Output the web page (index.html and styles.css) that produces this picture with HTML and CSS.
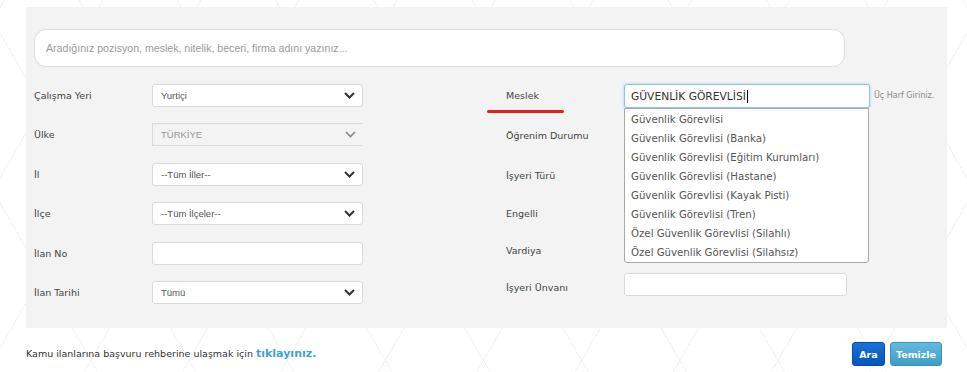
FILE: index.html
```html
<!DOCTYPE html>
<html lang="tr">
<head>
    <meta charset="UTF-8">
    <meta name="viewport" content="width=device-width, initial-scale=1.0">
    <title>İş İlanı Arama</title>
    <link rel="stylesheet" href="styles.css">
</head>
<body>
    <div class="page">
        <div class="panel">
            <div class="search-box">Aradığınız pozisyon, meslek, nitelik, beceri, firma adını yazınız...</div>

            <div class="form">
                <div class="col col-left">
                    <div class="row">
                        <label>Çalışma Yeri</label>
                        <div class="select">
                            <span>Yurtiçi</span>
                            <svg class="chev" width="11" height="7" viewBox="0 0 11 7"><polyline points="1,1 5.5,5.5 10,1" /></svg>
                        </div>
                    </div>
                    <div class="row">
                        <label>Ülke</label>
                        <div class="select disabled">
                            <span>TÜRKİYE</span>
                            <svg class="chev" width="11" height="7" viewBox="0 0 11 7"><polyline points="1,1 5.5,5.5 10,1" /></svg>
                        </div>
                    </div>
                    <div class="row">
                        <label>İl</label>
                        <div class="select">
                            <span>--Tüm İller--</span>
                            <svg class="chev" width="11" height="7" viewBox="0 0 11 7"><polyline points="1,1 5.5,5.5 10,1" /></svg>
                        </div>
                    </div>
                    <div class="row">
                        <label>İlçe</label>
                        <div class="select">
                            <span>--Tüm İlçeler--</span>
                            <svg class="chev" width="11" height="7" viewBox="0 0 11 7"><polyline points="1,1 5.5,5.5 10,1" /></svg>
                        </div>
                    </div>
                    <div class="row">
                        <label>İlan No</label>
                        <div class="text-input"></div>
                    </div>
                    <div class="row">
                        <label>İlan Tarihi</label>
                        <div class="select">
                            <span>Tümü</span>
                            <svg class="chev" width="11" height="7" viewBox="0 0 11 7"><polyline points="1,1 5.5,5.5 10,1" /></svg>
                        </div>
                    </div>
                </div>

                <div class="col col-right">
                    <div class="row">
                        <label class="marked">Meslek</label>
                        <div class="meslek">
                            <div class="text-input focused">GÜVENLİK GÖREVLİSİ<span class="caret"></span></div>
                            <ul class="suggestions">
                                <li>Güvenlik Görevlisi</li>
                                <li>Güvenlik Görevlisi (Banka)</li>
                                <li>Güvenlik Görevlisi (Eğitim Kurumları)</li>
                                <li>Güvenlik Görevlisi (Hastane)</li>
                                <li>Güvenlik Görevlisi (Kayak Pisti)</li>
                                <li>Güvenlik Görevlisi (Tren)</li>
                                <li>Özel Güvenlik Görevlisi (Silahlı)</li>
                                <li>Özel Güvenlik Görevlisi (Silahsız)</li>
                            </ul>
                        </div>
                        <span class="hint">Üç Harf Giriniz.</span>
                    </div>
                    <div class="row"><label>Öğrenim Durumu</label></div>
                    <div class="row"><label>İşyeri Türü</label></div>
                    <div class="row"><label>Engelli</label></div>
                    <div class="row"><label>Vardiya</label></div>
                    <div class="row">
                        <label>İşyeri Ünvanı</label>
                        <div class="text-input short"></div>
                    </div>
                </div>
            </div>
        </div>

        <div class="footer">
            <p class="guide">Kamu ilanlarına başvuru rehberine ulaşmak için <a href="#">tıklayınız.</a></p>
            <div class="buttons">
                <button class="btn btn-primary">Ara</button>
                <button class="btn btn-info">Temizle</button>
            </div>
        </div>
    </div>
</body>
</html>
```

FILE: styles.css
```css
* {
    margin: 0;
    padding: 0;
    box-sizing: border-box;
}

body {
    font-family: "DejaVu Sans", Verdana, sans-serif;
    background-color: #fff;
    background-image:
        repeating-linear-gradient(60deg, transparent 0, transparent 84px, #f3f3f3 84px, #f3f3f3 85px),
        repeating-linear-gradient(-60deg, transparent 0, transparent 84px, #f3f3f3 84px, #f3f3f3 85px);
    height: 372px;
    overflow: hidden;
}

.page {
    width: 921px;
    margin-left: 26px;
    padding-top: 7px;
}

.panel {
    background: #f3f3f3;
    height: 321px;
    padding: 22px 8px 0 8px;
}

.search-box {
    width: 811px;
    height: 38px;
    background: #fff;
    border: 1px solid #dcdcdc;
    border-radius: 12px;
    padding-left: 11px;
    display: flex;
    align-items: center;
    font-family: "Liberation Sans", Arial, sans-serif;
    font-size: 10.6px;
    color: #9a9a9a;
}

.form {
    display: flex;
    margin-top: 17px;
}

.col {
    display: flex;
    flex-direction: column;
}

.col-left {
    width: 472px;
}

.col-left .row {
    height: 39.4px;
}

.col-right .row {
    height: 37.8px;
}

.row {
    display: flex;
    align-items: flex-start;
    position: relative;
}

label {
    font-size: 9.5px;
    color: #444;
    line-height: 24px;
    height: 24px;
}

.col-left label {
    width: 118px;
}

.col-right label {
    width: 118px;
    position: relative;
}

.col-right .row:nth-child(n+2) label {
    line-height: 28px;
}

.col-right .row:nth-child(3) label {
    line-height: 32px;
}

.col-right .row:nth-child(4) label {
    line-height: 34px;
}

.col-right .row:nth-child(5) label {
    line-height: 32px;
}

.col-right .row:nth-child(6) label {
    line-height: 29px;
}

label.marked::after {
    content: "";
    position: absolute;
    left: -19px;
    top: 26px;
    width: 77px;
    height: 3px;
    border-radius: 2px;
    background: #e3201b;
}

.select {
    width: 211px;
    height: 23px;
    background: #fff;
    border: 1px solid #dadada;
    border-radius: 3px;
    display: flex;
    align-items: center;
    justify-content: space-between;
    padding: 0 7px 0 8px;
    font-family: "Liberation Sans", Arial, sans-serif;
    font-size: 9.5px;
    color: #555;
}

.select.disabled {
    background: #f3f3f3;
    border-right: none;
    border-radius: 0;
    color: #999;
    width: 210px;
    padding-right: 6px;
}

.chev polyline {
    fill: none;
    stroke: #333;
    stroke-width: 2;
}

.select.disabled .chev polyline {
    stroke: #888;
    stroke-width: 1.6;
}

.text-input {
    width: 211px;
    height: 23px;
    background: #fff;
    border: 1px solid #dadada;
    border-radius: 3px;
}

.text-input.short {
    width: 223px;
}

.meslek {
    position: relative;
    width: 246px;
}

.text-input.focused {
    width: 246px;
    height: 24px;
    border: 1px solid #8dc4ea;
    box-shadow: 0 0 3px rgba(102, 175, 233, 0.6);
    font-size: 10.7px;
    color: #333;
    padding-left: 6px;
    display: flex;
    align-items: center;
}

.caret {
    display: inline-block;
    width: 1px;
    height: 13px;
    background: #000;
    margin-left: 1px;
}

.suggestions {
    position: absolute;
    left: 0;
    top: 24px;
    width: 245px;
    height: 155px;
    list-style: none;
    background: #fff;
    border: 1px solid #aaa;
    border-radius: 0 0 3px 3px;
    padding-top: 1px;
    z-index: 2;
}

.suggestions li {
    font-size: 10.2px;
    color: #555;
    height: 19px;
    line-height: 19px;
    padding-left: 6px;
}

.hint {
    font-size: 8px;
    color: #888;
    line-height: 24px;
    margin-left: 4px;
}

.footer {
    display: flex;
    justify-content: space-between;
    align-items: center;
    height: 44px;
    padding-right: 5px;
}

.guide {
    font-size: 9.5px;
    color: #333;
    padding-top: 6px;
}

.guide a {
    font-size: 11px;
    font-weight: bold;
    color: #3da3d4;
    text-decoration: none;
}

.buttons {
    display: flex;
    gap: 5px;
    padding-top: 8px;
}

.btn {
    height: 24px;
    border: 1px solid transparent;
    border-radius: 3px;
    font-family: "DejaVu Sans", Verdana, sans-serif;
    font-size: 9.5px;
    font-weight: bold;
    color: #fff;
    cursor: pointer;
}

.btn-primary {
    width: 33px;
    background: linear-gradient(#1774d6, #0556b8);
    border-color: #054ea8;
}

.btn-info {
    width: 52px;
    background: linear-gradient(#62bade, #3f9dc4);
    border-color: #3a93b8;
}
```
